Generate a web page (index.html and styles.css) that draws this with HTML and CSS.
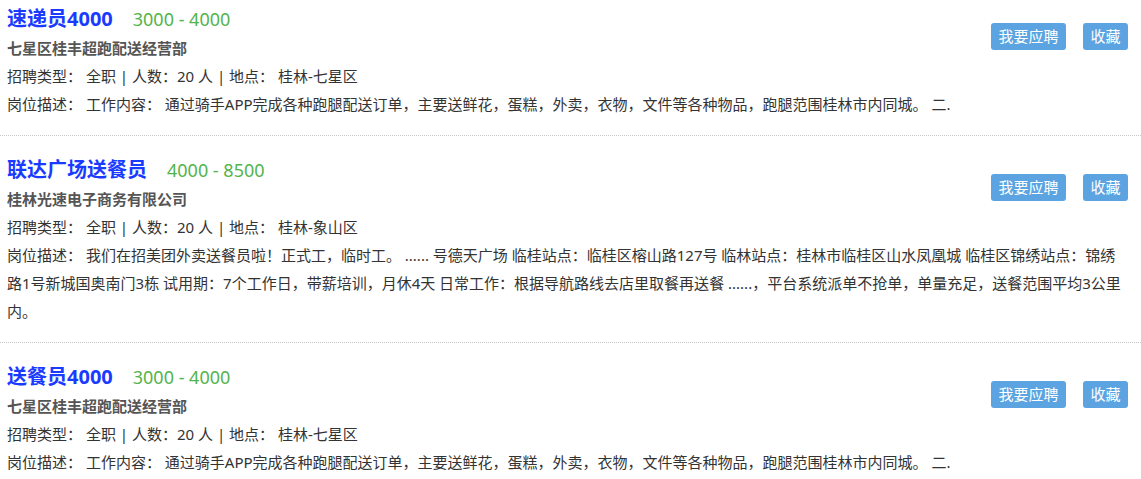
FILE: index.html
```html
<!DOCTYPE html>
<html lang="zh-CN">
<head>
  <meta charset="UTF-8">
  <meta name="viewport" content="width=device-width, initial-scale=1.0">
  <title>招聘信息列表</title>
  <link rel="stylesheet" href="styles.css">
</head>
<body>
  <div class="job-list">
    <div class="job">
      <div class="job-btns">
        <a href="#" class="btn">我要应聘</a>
        <a href="#" class="btn">收藏</a>
      </div>
      <h3 class="job-title"><a href="#">速递员4000</a><span class="salary">3000 - 4000</span></h3>
      <p class="company">七星区桂丰超跑配送经营部</p>
      <p class="meta">招聘类型： 全职 | 人数：20 人 | 地点： 桂林-七星区</p>
      <p class="desc">岗位描述： 工作内容： 通过骑手APP完成各种跑腿配送订单，主要送鲜花，蛋糕，外卖，衣物，文件等各种物品，跑腿范围桂林市内同城。 二.</p>
    </div>

    <div class="job">
      <div class="job-btns">
        <a href="#" class="btn">我要应聘</a>
        <a href="#" class="btn">收藏</a>
      </div>
      <h3 class="job-title"><a href="#">联达广场送餐员</a><span class="salary">4000 - 8500</span></h3>
      <p class="company">桂林光速电子商务有限公司</p>
      <p class="meta">招聘类型： 全职 | 人数：20 人 | 地点： 桂林-象山区</p>
      <p class="desc">岗位描述： 我们在招美团外卖送餐员啦！正式工，临时工。 ...... 号德天广场 临桂站点：临桂区榕山路127号 临林站点：桂林市临桂区山水凤凰城 临桂区锦绣站点：锦绣路1号新城国奥南门3栋 试用期：7个工作日，带薪培训，月休4天 日常工作：根据导航路线去店里取餐再送餐 ......，平台系统派单不抢单，单量充足，送餐范围平均3公里内。</p>
    </div>

    <div class="job">
      <div class="job-btns">
        <a href="#" class="btn">我要应聘</a>
        <a href="#" class="btn">收藏</a>
      </div>
      <h3 class="job-title"><a href="#">送餐员4000</a><span class="salary">3000 - 4000</span></h3>
      <p class="company">七星区桂丰超跑配送经营部</p>
      <p class="meta">招聘类型： 全职 | 人数：20 人 | 地点： 桂林-七星区</p>
      <p class="desc">岗位描述： 工作内容： 通过骑手APP完成各种跑腿配送订单，主要送鲜花，蛋糕，外卖，衣物，文件等各种物品，跑腿范围桂林市内同城。 二.</p>
    </div>
  </div>
</body>
</html>
```

FILE: styles.css
```css
/* Job list */
body {
  font-family: "Noto Sans", "Noto Sans CJK SC", sans-serif;
  font-size: 15px;
  color: #333;
  background-color: #fff;
  margin: 0;
}
.job {
  padding: 19px 13px 17px 7px;
  border-bottom: 1px dotted #c8c8c8;
}
.job:first-child {
  padding-top: 4px;
}
.job:last-child {
  border-bottom: none;
}
.job-btns {
  float: right;
  margin-top: 19px;
}
.btn {
  display: inline-block;
  height: 27px;
  line-height: 27px;
  padding: 0 7.5px;
  margin-left: 13px;
  background-color: #5ba4e1;
  color: #fff;
  text-decoration: none;
  border-radius: 3px;
}
.job-title {
  margin: 0;
  line-height: 30px;
  font-size: 20px;
  font-weight: bold;
}
.job-title a {
  color: #1a3bff;
  text-decoration: none;
}
.salary {
  margin-left: 20px;
  font-size: 18px;
  font-weight: normal;
  color: #53b44b;
}
.company, .meta, .desc {
  margin: 0;
  line-height: 28px;
}
.company {
  font-weight: bold;
  color: #555;
}
```
